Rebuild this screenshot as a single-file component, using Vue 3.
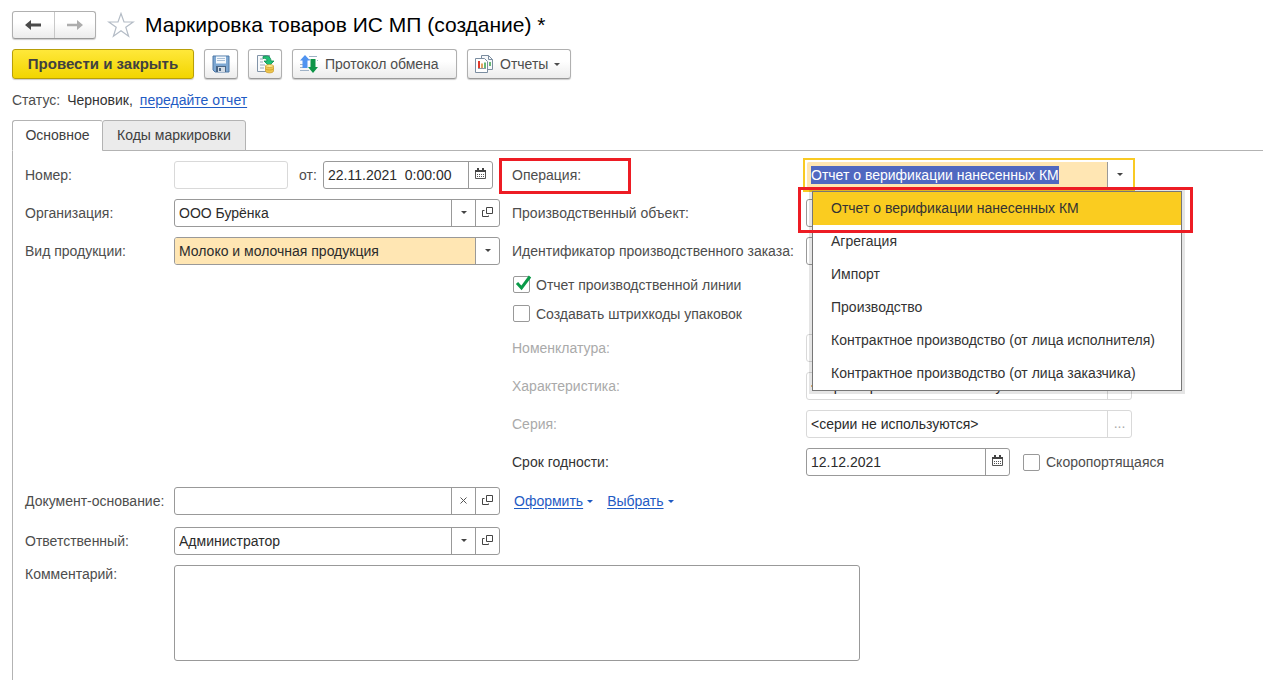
<script setup>
import { onMounted, ref } from 'vue'

const operations = [
  'Отчет о верификации нанесенных КМ',
  'Агрегация',
  'Импорт',
  'Производство',
  'Контрактное производство (от лица исполнителя)',
  'Контрактное производство (от лица заказчика)',
]
const operation = ref(operations[0])
const operationInput = ref(null)
const lineReport = ref(true)
const packCodes = ref(false)
const perishable = ref(false)

onMounted(() => {
  operationInput.value.focus()
  operationInput.value.select()
})
</script>

<template>
  <main class="page">
    <header class="heading">
      <div class="nav">
        <button type="button" aria-label="Назад">
          <svg width="16" height="12" viewBox="0 0 16 12"><path d="M0 6 6 1v3.600h10v2.800H6V11z" fill="#4a4a4a" /></svg>
        </button>
        <button type="button" aria-label="Вперед">
          <svg width="16" height="12" viewBox="0 0 16 12"><path d="M16 6 10 1v3.800H0v2.400h10V11z" fill="#adadad" /></svg>
        </button>
      </div>
      <button type="button" class="star" aria-label="В избранное">
        <svg width="28" height="26" viewBox="0 0 28 26">
          <path d="M14 1.500 17 10h9.200l-7.400 5.300 2.800 8.900-7.600-5.500-7.600 5.500 2.800-8.900L1.800 10H11z" fill="#fff" stroke="#b4bcc6" stroke-width="1.200" />
        </svg>
      </button>
      <h1>Маркировка товаров ИС МП (создание) *</h1>
    </header>

    <div class="toolbar">
      <button type="button" class="btn primary">Провести и закрыть</button>
      <button type="button" class="btn square" aria-label="Записать">
        <svg width="18" height="18" viewBox="0 0 18 18">
          <path d="M1 1h16v16H3l-2-2z" fill="#7da7d2" stroke="#4f78a6" />
          <path d="M4 1.500h10v7H4z" fill="#f4f8fc" />
          <path d="M5 3.500h8M5 5.500h8" stroke="#a9bfd6" />
          <path d="M4 11h10v6H4z" fill="#4a6584" />
          <path d="M6 12h7v5H6z" fill="#d3dbe4" />
          <path d="M7 13h2v3H7z" fill="#4a6584" />
        </svg>
      </button>
      <button type="button" class="btn square" aria-label="Провести">
        <svg width="20" height="20" viewBox="0 0 20 20">
          <path d="M2.500 1.500h12v16h-12z" fill="#f8fafc" stroke="#8294a8" />
          <path d="M5 5h3M5 8h3M5 11h5M5 14h4" stroke="#9aa9b8" />
          <path d="M8 2.500c5-1.500 8 .5 8 4.500h3l-5 5-5-5h3c0-2-1.500-3-4-2.500z" fill="#1fbf75" stroke="#0c8a4c" stroke-width=".8" />
          <path d="M10.500 12v5c0 2.500 8 2.500 8 0v-5z" fill="#edc64e" stroke="#c99a28" stroke-width=".7" />
          <path d="M10.500 14.500c0 2 8 2 8 0" fill="none" stroke="#c99a28" stroke-width=".8" />
          <ellipse cx="14.500" cy="12" rx="4" ry="1.500" fill="#ffe992" stroke="#c99a28" stroke-width=".7" />
        </svg>
      </button>
      <button type="button" class="btn wide exchange">
        <svg width="20" height="20" viewBox="0 0 20 20">
          <path d="M10 2.500h8M10 5.500h1M1 10.500h3M1 13.500h3M1 16.500h9M18 6.500h1" stroke="#9fb2c6" />
          <path d="M6 1 11 6.500H8.500V14h-5V6.500H1z" fill="#4f93f0" />
          <path d="M14 19 19 13h-2.500V5h-5v8H9z" fill="#0d9447" />
        </svg>
        Протокол обмена
      </button>
      <button type="button" class="btn wide reports">
        <svg width="20" height="20" viewBox="0 0 20 20">
          <path d="M7.500 1.500h7l4 4v10h-11z" fill="#f7f9fb" stroke="#7b8da0" />
          <path d="M14.500 1.500v4h4" fill="none" stroke="#7b8da0" />
          <path d="M16 8v4" stroke="#3aa44a" stroke-width="1.500" />
          <path d="M1.500 4.500h9l3 3v11h-12z" fill="#fff" stroke="#7b8da0" />
          <path d="M4 14.500h8" stroke="#8a97a5" />
          <path d="M5 7v7" stroke="#e0392b" stroke-width="2" />
          <path d="M8 9.500V14" stroke="#d9822b" stroke-width="1.500" />
          <path d="M11 8.500V14" stroke="#34a047" stroke-width="1.500" />
        </svg>
        Отчеты
        <i class="caret"></i>
      </button>
    </div>

    <p class="status"><span>Статус:</span><span class="dark">Черновик,</span><a href="#">передайте отчет</a></p>

    <div class="tabs" role="tablist">
      <button type="button" role="tab" aria-selected="true" class="tab active">Основное</button>
      <button type="button" role="tab" aria-selected="false" class="tab">Коды маркировки</button>
    </div>

    <form class="panel" @submit.prevent>
      <div class="columns">
        <div class="stack">
          <div class="row">
            <label for="number">Номер:</label>
            <div class="number-date">
              <div class="field soft"><input id="number" type="text"></div>
              <label for="date">от:</label>
              <div class="field">
                <input id="date" type="text" value="22.11.2021  0:00:00">
                <button type="button" aria-label="Выбрать дату">
                  <svg width="11" height="12" viewBox="0 0 11 12"><path d="M.5 2.500h10v8H.5z" fill="#fff" stroke="#555" /><path d="M0 2h11v2H0zM2 0h2v2H2zM7 0h2v2H7z" fill="#444" /><path d="M2 6.500h7M2 8.500h7" stroke="#555" stroke-dasharray="1 1" /></svg>
                </button>
              </div>
            </div>
          </div>
          <div class="row">
            <label for="org">Организация:</label>
            <div class="field">
              <select id="org"><option>ООО Бурёнка</option></select>
              <button type="button" aria-label="Выбрать организацию"><i class="caret"></i></button>
              <button type="button" aria-label="Открыть организацию">
                <svg width="12" height="12" viewBox="0 0 12 12"><path d="M4.500 1.500h6v6h-6zM2.500 4.500h-2v6h6v-1" fill="none" stroke="#444" /></svg>
              </button>
            </div>
          </div>
          <div class="row">
            <label for="kind">Вид продукции:</label>
            <div class="field">
              <select id="kind" class="warm"><option>Молоко и молочная продукция</option></select>
              <button type="button" aria-label="Выбрать вид продукции"><i class="caret"></i></button>
            </div>
          </div>
        </div>

        <div class="stack right">
          <div class="row">
            <label for="operation" class="marked">Операция:</label>
            <div class="field focused">
              <input id="operation" ref="operationInput" v-model="operation" class="warm" type="text" role="combobox" aria-expanded="true" aria-controls="operation-list">
              <button type="button" aria-label="Закрыть список"><i class="caret"></i></button>
              <ul id="operation-list" class="menu" role="listbox">
                <li v-for="item in operations" :key="item" role="option" :aria-selected="item === operation" :class="{ current: item === operation }" @click="operation = item">{{ item }}</li>
              </ul>
            </div>
          </div>
          <div class="row">
            <label for="object">Производственный объект:</label>
            <div class="field"><input id="object" type="text"></div>
          </div>
          <div class="row">
            <label for="order">Идентификатор производственного заказа:</label>
            <div class="field"><input id="order" type="text"></div>
          </div>
          <div class="checks">
            <label class="check"><input v-model="lineReport" type="checkbox"><svg v-if="lineReport" class="tick" width="19" height="18" viewBox="0 0 19 18"><path d="m4 8 4.500 5L17 1.500" fill="none" stroke="#0a9a48" stroke-width="3" /></svg>Отчет производственной линии</label>
            <label class="check"><input v-model="packCodes" type="checkbox">Создавать штрихкоды упаковок</label>
          </div>
          <div class="row muted">
            <label for="item">Номенклатура:</label>
            <div class="field soft"><input id="item" type="text" disabled></div>
          </div>
          <div class="row muted">
            <label for="feature">Характеристика:</label>
            <div class="field soft"><input id="feature" type="text" disabled value="<характеристики не используются>"><button type="button" disabled aria-label="Выбрать характеристику"></button></div>
          </div>
          <div class="row muted">
            <label for="series">Серия:</label>
            <div class="field soft"><input id="series" type="text" disabled value="<серии не используются>"><button type="button" disabled aria-label="Выбрать серию">...</button></div>
          </div>
          <div class="row">
            <label for="expiry" class="dark">Срок годности:</label>
            <div class="expiry">
              <div class="field expiry-date">
                <input id="expiry" type="text" value="12.12.2021">
                <button type="button" aria-label="Выбрать срок годности">
                  <svg width="11" height="12" viewBox="0 0 11 12"><path d="M.5 2.500h10v8H.5z" fill="#fff" stroke="#555" /><path d="M0 2h11v2H0zM2 0h2v2H2zM7 0h2v2H7z" fill="#444" /><path d="M2 6.500h7M2 8.500h7" stroke="#555" stroke-dasharray="1 1" /></svg>
                </button>
              </div>
              <label class="check"><input v-model="perishable" type="checkbox">Скоропортящаяся</label>
            </div>
          </div>
        </div>
      </div>

      <div class="columns lower">
        <div class="stack loose">
          <div class="row">
            <label for="basis">Документ-основание:</label>
            <div class="field">
              <input id="basis" type="text">
              <button type="button" aria-label="Очистить"><svg width="7" height="7" viewBox="0 0 7 7"><path d="m.5.5 6 6m0-6-6 6" stroke="#555" /></svg></button>
              <button type="button" aria-label="Открыть документ">
                <svg width="12" height="12" viewBox="0 0 12 12"><path d="M4.500 1.500h6v6h-6zM2.500 4.500h-2v6h6v-1" fill="none" stroke="#444" /></svg>
              </button>
            </div>
          </div>
          <div class="row">
            <label for="owner">Ответственный:</label>
            <div class="field">
              <select id="owner"><option>Администратор</option></select>
              <button type="button" aria-label="Выбрать ответственного"><i class="caret"></i></button>
              <button type="button" aria-label="Открыть ответственного">
                <svg width="12" height="12" viewBox="0 0 12 12"><path d="M4.500 1.500h6v6h-6zM2.500 4.500h-2v6h6v-1" fill="none" stroke="#444" /></svg>
              </button>
            </div>
          </div>
        </div>
        <div class="links">
          <span><a href="#">Оформить</a><i class="caret"></i></span>
          <span><a href="#">Выбрать</a><i class="caret"></i></span>
        </div>
      </div>

      <div class="row comment">
        <label for="comment">Комментарий:</label>
        <textarea id="comment"></textarea>
      </div>
    </form>
  </main>
</template>

<style>
body {
  background: #fff;
}
#app {
  display: grid;
  min-height: 100vh;
}
</style>

<style scoped>
*,
*::after {
  box-sizing: border-box;
}
.page {
  display: flex;
  flex-direction: column;
  padding: 11px 0 0 12px;
  overflow: hidden;
  color: #4d4d4d;
  font: 14px/18px "Liberation Sans", Arial, sans-serif;
}
button,
input,
select,
textarea {
  margin: 0;
  color: inherit;
  font: inherit;
}
svg {
  display: block;
  flex: none;
}
a {
  color: #1f5bc4;
  text-underline-offset: 2px;
}
.dark {
  color: #333;
}
.heading {
  display: flex;
  align-items: center;
  height: 28px;
}
.nav {
  display: flex;
  width: 84px;
  height: 28px;
  border: 1px solid #b0b0b0;
  border-bottom-color: #999;
  border-radius: 3px;
  background: linear-gradient(#fff 40%, #ececec);
  box-shadow: 0 1px 1px #ccc;
}
.nav button {
  display: flex;
  flex: 1;
  align-items: center;
  justify-content: center;
  padding: 0;
  border: 0;
  background: none;
}
.nav button + button {
  border-left: 1px solid #c8c8c8;
}
.star {
  margin: 0 10px 0 11px;
  padding: 0;
  border: 0;
  background: none;
}
h1 {
  margin: 0;
  color: #000;
  font-size: 21px;
  font-weight: 400;
  line-height: 28px;
  white-space: nowrap;
}
.toolbar {
  display: flex;
  gap: 10px;
  margin-top: 10px;
}
.btn {
  display: flex;
  align-items: center;
  justify-content: center;
  height: 30px;
  padding: 0;
  border: 1px solid #b0b0b0;
  border-bottom-color: #999;
  border-radius: 3px;
  background: linear-gradient(#fff 40%, #ececec);
  box-shadow: 0 1px 1px #ccc;
  white-space: nowrap;
}
.primary {
  width: 182px;
  border-color: #b89f08;
  background: linear-gradient(#ffe83a, #f2d500);
  color: #404040;
  font-size: 15px;
  font-weight: 700;
}
.square {
  width: 34px;
}
.wide {
  gap: 6px;
  justify-content: flex-start;
  padding-left: 6px;
}
.exchange {
  width: 165px;
}
.reports {
  width: 104px;
}
.caret {
  flex: none;
  width: 0;
  height: 0;
  border: 3px solid transparent;
  border-top-color: currentColor;
  border-bottom: 0;
}
.status {
  display: flex;
  gap: 7px;
  margin: 12px 0 11px;
}
.tabs {
  z-index: 1;
  display: flex;
  height: 31px;
  margin-bottom: -1px;
}
.tab {
  width: 144px;
  padding: 0 0 2px;
  border: 1px solid #b3b3b3;
  border-radius: 3px 3px 0 0;
  background: #ebebeb;
  color: #404040;
}
.tab.active {
  width: 91px;
  border-right-color: transparent;
  border-bottom-color: #fff;
  background: #fff;
}
.tab.active + .tab {
  margin-left: -1px;
}
.panel {
  flex: 1;
  padding: 10px 0 19px 12px;
  border-top: 1px solid #b3b3b3;
  border-left: 1px solid #b3b3b3;
}
.columns {
  display: grid;
  grid-template-columns: minmax(0, 475px) minmax(0, 1fr);
  gap: 12px;
}
.lower {
  margin-top: 11px;
}
.stack {
  display: flex;
  flex-direction: column;
  gap: 10px;
}
.loose {
  gap: 12px;
}
.row {
  display: grid;
  grid-template-columns: 149px minmax(0, 1fr);
  align-items: center;
  min-height: 28px;
}
.row label {
  white-space: nowrap;
}
.right .row {
  grid-template-columns: 294px minmax(0, 326px);
}
.muted label {
  color: #aaa;
}
.field {
  position: relative;
  display: flex;
  min-width: 0;
  height: 28px;
  border: 1px solid #999;
  border-radius: 3px;
  background: #fff;
  color: #2b2b2b;
}
.field input,
.field select {
  flex: 1;
  min-width: 0;
  padding: 0 4px;
  border: 0;
  border-radius: 2px 0 0 2px;
  outline: 0;
  appearance: none;
  background: transparent;
  white-space: pre;
}
.field input:disabled {
  color: #2b2b2b;
}
.field button {
  display: flex;
  flex: none;
  align-items: center;
  justify-content: center;
  width: 24px;
  padding: 0 0 2px;
  border: 0;
  border-left: 1px solid #999;
  background: none;
  color: #444;
}
.field.soft {
  border-color: #d9d9d9;
}
.field.soft button {
  border-color: #d9d9d9;
  color: #aaa;
}
.field .warm {
  background: #ffe6b3;
}
.field.focused {
  border-color: #fff;
  border-radius: 0;
  outline: 2px solid #f9ca24;
  outline-offset: 1px;
}
.focused input::selection {
  background: #5068c0;
  color: #fff;
}
.number-date {
  display: grid;
  grid-template-columns: 114px 35px 170px;
  align-items: center;
}
.number-date label {
  padding-left: 11px;
}
.marked {
  position: relative;
}
.marked::after {
  position: absolute;
  inset: -8px auto auto -13px;
  width: 132px;
  height: 36px;
  border: 3px solid #ed1c24;
  content: "";
}
.menu {
  position: absolute;
  z-index: 2;
  top: 29px;
  left: 5px;
  width: 370px;
  margin: 0;
  padding: 0;
  border: 1px solid #777;
  background: #fff;
  box-shadow: 0 0 0 3px rgba(0, 0, 0, 0.1);
  color: #333;
  list-style: none;
}
.menu::after {
  position: absolute;
  inset: -5px -12px auto -15px;
  height: 46px;
  border: 3px solid #ed1c24;
  content: "";
  pointer-events: none;
}
.menu li {
  padding-left: 18px;
  line-height: 33px;
  white-space: nowrap;
}
.menu .current {
  background: #facc20;
}
.checks {
  display: grid;
  gap: 10px;
  padding-bottom: 1px;
}
.check {
  position: relative;
  display: flex;
  gap: 6px;
  align-items: center;
  height: 19px;
}
.check input {
  width: 17px;
  height: 17px;
  margin-left: 1px;
  border: 1px solid #999;
  border-radius: 2px;
  appearance: none;
  background: #fff;
}
.tick {
  position: absolute;
  top: 0;
  left: 1px;
  pointer-events: none;
}
.expiry {
  display: flex;
  gap: 12px;
}
.expiry-date {
  flex: 0 0 204px;
}
.expiry .check {
  height: 28px;
}
.links {
  display: flex;
  gap: 14px;
  height: 28px;
  padding-left: 2px;
}
.links span {
  display: flex;
  gap: 4px;
  align-items: center;
  color: #1f5bc4;
}
.comment {
  align-items: start;
  margin-top: 10px;
}
textarea {
  width: 100%;
  max-width: 686px;
  height: 96px;
  padding: 4px;
  border: 1px solid #999;
  border-radius: 3px;
  resize: none;
}
</style>
